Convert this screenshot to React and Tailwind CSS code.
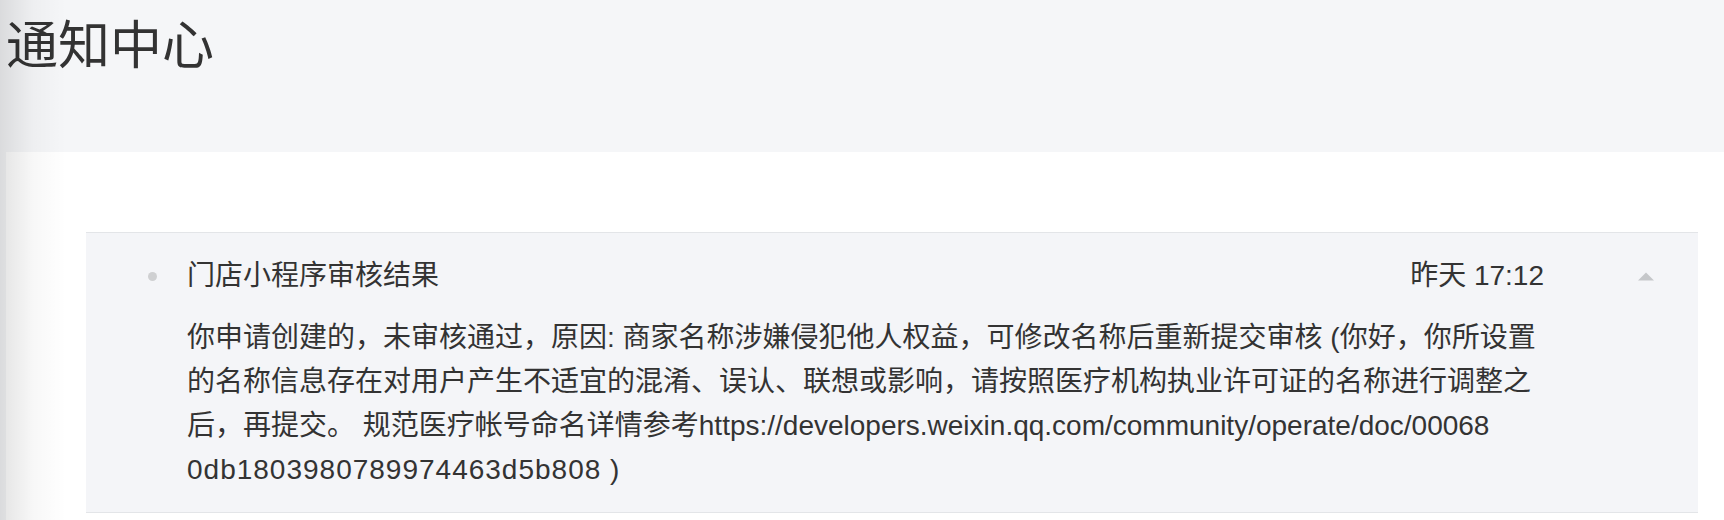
import React from "react";

export default function App() {
  const font = { fontFamily: '"Liberation Sans", "Noto Sans CJK SC", sans-serif' };
  return (
    <div className="relative w-full h-[520px] overflow-hidden bg-[#f5f6f8] text-[#333333]" style={font}>
      <div className="h-[152px] pl-[6px] pt-[10px]">
        <h1 className="text-[52px] leading-[72px] font-normal text-[#333333]">通知中心</h1>
      </div>
      <div className="ml-[6px] h-[368px] bg-white pt-[80px] pl-[80px] pr-[26px]">
        <div className="bg-[#f4f5f8] border-y border-[#e3e5e8] pt-[21px] pb-[20px]">
          <div className="flex items-center h-[44px]">
            <span className="ml-[62px] w-[9px] h-[9px] rounded-full bg-[#cfd0d2]" />
            <span className="ml-[30px] text-[28px] leading-[44px] text-[#333333]">门店小程序审核结果</span>
            <span className="flex-1" />
            <span className="text-[28px] leading-[44px] text-[#333333]">昨天 17:12</span>
            <span className="ml-[93px] mr-[43px] flex items-center">
              <svg width="18" height="9" viewBox="0 0 18 9">
                <polygon points="1,8.5 9,0.5 17,8.5" fill="#c5c7ca" />
              </svg>
            </span>
          </div>
          <p className="mt-[18px] pl-[101px] text-[28px] leading-[44px] whitespace-nowrap text-[#333333]">
            你申请创建的，未审核通过，原因: 商家名称涉嫌侵犯他人权益，可修改名称后重新提交审核 (你好，你所设置
            <br />
            的名称信息存在对用户产生不适宜的混淆、误认、联想或影响，请按照医疗机构执业许可证的名称进行调整之
            <br />
            后，再提交。 规范医疗帐号命名详情参考https://developers.weixin.qq.com/community/operate/doc/00068
            <br />
            <span className="tracking-[1px]">0db1803980789974463d5b808 )</span>
          </p>
        </div>
      </div>
      <div className="pointer-events-none absolute left-0 top-0 h-full w-[66px] bg-linear-to-r from-black/[0.11] via-black/[0.03] to-transparent" />
    </div>
  );
}
